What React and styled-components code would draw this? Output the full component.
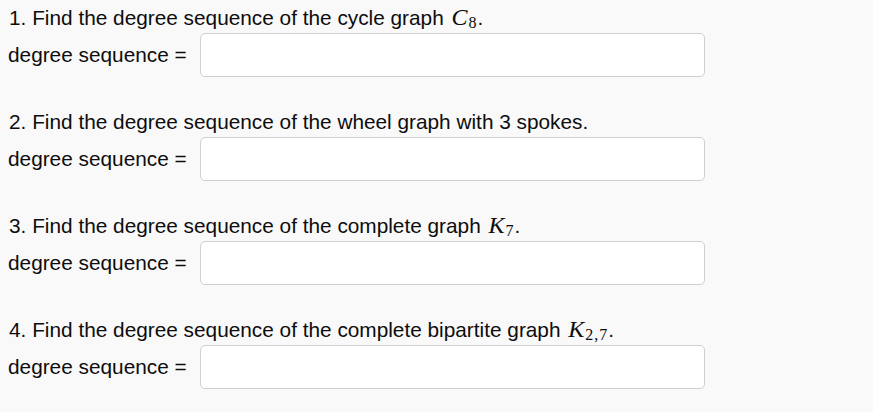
import React from 'react'
import styled, { createGlobalStyle } from 'styled-components'

const GlobalStyle = createGlobalStyle`
  html, body {
    margin: 0;
    padding: 0;
    background: #f9f9f9;
  }
`

const Page = styled.div`
  padding: 2px 0 0 9px;
  font-family: "Liberation Sans", Arial, sans-serif;
  font-size: 20.8px;
  color: #0d0d0d;
`

const Section = styled.div`
  display: flex;
  flex-direction: column;
  margin-bottom: 29px;
`

const Question = styled.div`
  height: 31px;
  line-height: 31px;
  white-space: nowrap;
`

const Row = styled.div`
  display: flex;
  align-items: center;
  gap: 13px;
  height: 44px;
`

const Label = styled.span`
  margin-left: -1px;
`

const Input = styled.input`
  box-sizing: border-box;
  width: 505px;
  height: 44px;
  background: #fff;
  border: 1px solid #cfcfcf;
  border-radius: 5px;
  font: inherit;
  padding: 0 10px;
  outline: none;
`

const MathVar = styled.span`
  font-family: "Liberation Serif", "Times New Roman", serif;
  font-style: italic;
  font-size: 24px;
  margin-left: 2px;
`

const Sub = styled.sub`
  font-family: "Liberation Serif", "Times New Roman", serif;
  font-style: normal;
  font-size: 16px;
  vertical-align: -3px;
  line-height: 0;
  margin-left: 1px;
  letter-spacing: 1px;
`

const questions = [
  { n: 1, text: 'Find the degree sequence of the cycle graph', v: 'C', sub: '8' },
  { n: 2, text: 'Find the degree sequence of the wheel graph with 3 spokes.' },
  { n: 3, text: 'Find the degree sequence of the complete graph', v: 'K', sub: '7' },
  { n: 4, text: 'Find the degree sequence of the complete bipartite graph', v: 'K', sub: '2,7' },
]

export default function App() {
  return (
    <>
      <GlobalStyle />
      <Page>
        {questions.map((q) => (
          <Section key={q.n}>
            <Question>
              {q.n}. {q.text}
              {q.v && (
                <>
                  {' '}
                  <MathVar>
                    {q.v}
                    <Sub>{q.sub}</Sub>
                  </MathVar>
                  .
                </>
              )}
            </Question>
            <Row>
              <Label>degree sequence =</Label>
              <Input type="text" />
            </Row>
          </Section>
        ))}
      </Page>
    </>
  )
}
